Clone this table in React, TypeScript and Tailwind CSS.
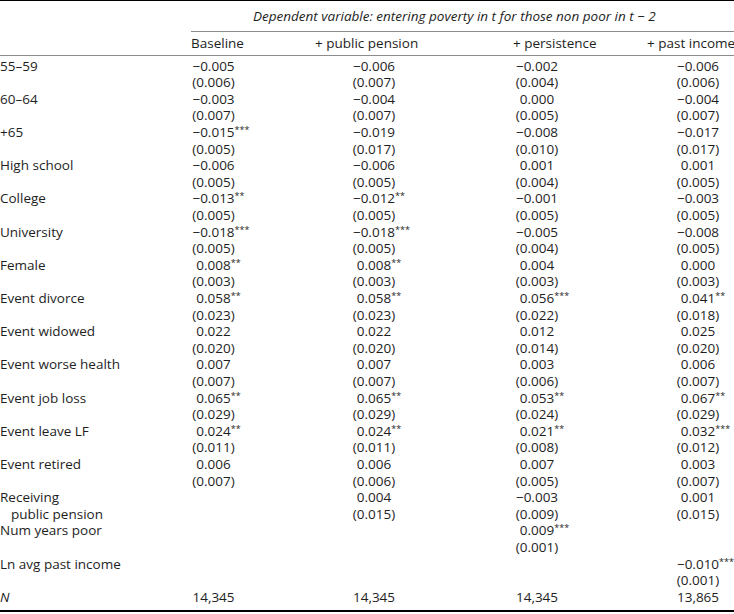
import React from "react";

type Cell = [string, string] | null;
type Row = { label: string[]; cells: Cell[] };

const c = (a: string, b: string): Cell => [a, b];

const rows: Row[] = [
  { label: ["55–59"], cells: [c("−0.005", "(0.006)"), c("−0.006", "(0.007)"), c("−0.002", "(0.004)"), c("−0.006", "(0.006)")] },
  { label: ["60–64"], cells: [c("−0.003", "(0.007)"), c("−0.004", "(0.007)"), c("0.000", "(0.005)"), c("−0.004", "(0.007)")] },
  { label: ["+65"], cells: [c("−0.015***", "(0.005)"), c("−0.019", "(0.017)"), c("−0.008", "(0.010)"), c("−0.017", "(0.017)")] },
  { label: ["High school"], cells: [c("−0.006", "(0.005)"), c("−0.006", "(0.005)"), c("0.001", "(0.004)"), c("0.001", "(0.005)")] },
  { label: ["College"], cells: [c("−0.013**", "(0.005)"), c("−0.012**", "(0.005)"), c("−0.001", "(0.005)"), c("−0.003", "(0.005)")] },
  { label: ["University"], cells: [c("−0.018***", "(0.005)"), c("−0.018***", "(0.005)"), c("−0.005", "(0.004)"), c("−0.008", "(0.005)")] },
  { label: ["Female"], cells: [c("0.008**", "(0.003)"), c("0.008**", "(0.003)"), c("0.004", "(0.003)"), c("0.000", "(0.003)")] },
  { label: ["Event divorce"], cells: [c("0.058**", "(0.023)"), c("0.058**", "(0.023)"), c("0.056***", "(0.022)"), c("0.041**", "(0.018)")] },
  { label: ["Event widowed"], cells: [c("0.022", "(0.020)"), c("0.022", "(0.020)"), c("0.012", "(0.014)"), c("0.025", "(0.020)")] },
  { label: ["Event worse health"], cells: [c("0.007", "(0.007)"), c("0.007", "(0.007)"), c("0.003", "(0.006)"), c("0.006", "(0.007)")] },
  { label: ["Event job loss"], cells: [c("0.065**", "(0.029)"), c("0.065**", "(0.029)"), c("0.053**", "(0.024)"), c("0.067**", "(0.029)")] },
  { label: ["Event leave LF"], cells: [c("0.024**", "(0.011)"), c("0.024**", "(0.011)"), c("0.021**", "(0.008)"), c("0.032***", "(0.012)")] },
  { label: ["Event retired"], cells: [c("0.006", "(0.007)"), c("0.006", "(0.006)"), c("0.007", "(0.005)"), c("0.003", "(0.007)")] },
  { label: ["Receiving", "public pension"], cells: [null, c("0.004", "(0.015)"), c("−0.003", "(0.009)"), c("0.001", "(0.015)")] },
  { label: ["Num years poor"], cells: [null, null, c("0.009***", "(0.001)"), null] },
  { label: ["Ln avg past income"], cells: [null, null, null, c("−0.010***", "(0.001)")] },
];

const offsets = ["ml-[-7.5px]", "ml-[47px]", "ml-[-17px]", "ml-[21px]"];

function Val({ text }: { text: string }) {
  const m = text.match(/^([^*]*)(\**)$/);
  const num = m ? m[1] : text;
  const stars = m ? m[2] : "";
  return (
    <div className="flex w-[60px] justify-center whitespace-nowrap">
      <span>{num}</span>
      {stars && (
        <span className="inline-block w-0 overflow-visible text-[9px] leading-none relative top-[1px]">
          {stars}
        </span>
      )}
    </div>
  );
}

export default function App() {
  return (
    <div
      className="w-[734px] h-[614px] overflow-hidden bg-white text-[13.5px] text-[#1e1e1e]"
      style={{ fontFamily: '"Open Sans", "Noto Sans", sans-serif' }}
    >
      <div className="border-t-[1.5px] border-black">
        <div className="grid grid-cols-[191px_1fr] h-[31px]">
          <div />
          <div className="border-b border-[#8c8c8c] flex items-center pl-[62px] italic whitespace-nowrap">
            Dependent variable: entering poverty in t for those non poor in t − 2
          </div>
        </div>
        <div className="grid grid-cols-[191px_124px_198px_134px_87px] h-[24px] items-center border-b border-[#8c8c8c] whitespace-nowrap">
          <div />
          <div>Baseline</div>
          <div>+ public pension</div>
          <div>+ persistence</div>
          <div>+ past income</div>
        </div>
      </div>

      <div className="pt-[1.7px] leading-[16.6px]">
        {rows.map((r, i) => (
          <div key={i} className="grid grid-cols-[191px_106px_227px_123px_87px]">
            <div className="whitespace-nowrap">
              {r.label.map((l, j) => (
                <div key={j} className={j > 0 ? "pl-[11px]" : ""}>
                  {l}
                </div>
              ))}
            </div>
            {r.cells.map((cell, k) => (
              <div key={k} className="flex">
                {cell && (
                  <div className={`flex flex-col ${offsets[k]}`}>
                    <Val text={cell[0]} />
                    <Val text={cell[1]} />
                  </div>
                )}
              </div>
            ))}
          </div>
        ))}
        <div className="grid grid-cols-[191px_106px_227px_123px_87px] pb-[5px] border-b-2 border-black">
          <div className="italic">N</div>
          {["14,345", "14,345", "14,345", "13,865"].map((n, k) => (
            <div key={k} className="flex">
              <div className={offsets[k]}>
                <Val text={n} />
              </div>
            </div>
          ))}
        </div>
      </div>
    </div>
  );
}
